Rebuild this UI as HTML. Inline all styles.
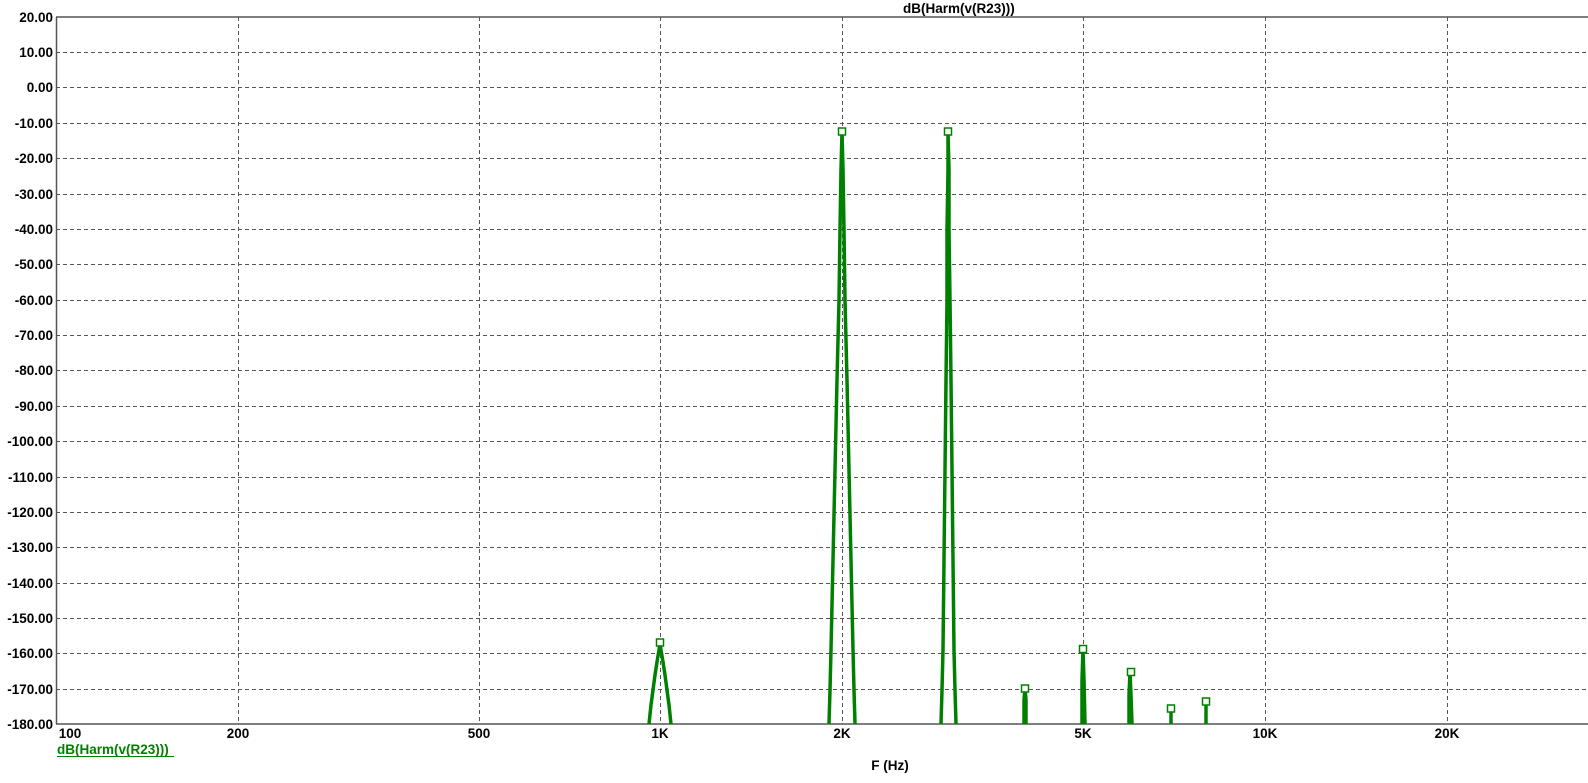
<!DOCTYPE html>
<html><head><meta charset="utf-8"><style>
html,body{margin:0;padding:0;background:#fff;}
svg{display:block;}
text{font-family:"Liberation Sans",Arial,sans-serif;font-weight:bold;font-size:13.5px;fill:#000;}
</style></head><body>
<svg width="1588" height="783" xmlns="http://www.w3.org/2000/svg">
<g stroke="#555" stroke-width="1" stroke-dasharray="4,3" fill="none">
<line x1="56" y1="52.5" x2="1588" y2="52.5"/><line x1="56" y1="87.5" x2="1588" y2="87.5"/><line x1="56" y1="123.5" x2="1588" y2="123.5"/><line x1="56" y1="158.5" x2="1588" y2="158.5"/><line x1="56" y1="194.5" x2="1588" y2="194.5"/><line x1="56" y1="229.5" x2="1588" y2="229.5"/><line x1="56" y1="264.5" x2="1588" y2="264.5"/><line x1="56" y1="300.5" x2="1588" y2="300.5"/><line x1="56" y1="335.5" x2="1588" y2="335.5"/><line x1="56" y1="370.5" x2="1588" y2="370.5"/><line x1="56" y1="406.5" x2="1588" y2="406.5"/><line x1="56" y1="441.5" x2="1588" y2="441.5"/><line x1="56" y1="477.5" x2="1588" y2="477.5"/><line x1="56" y1="512.5" x2="1588" y2="512.5"/><line x1="56" y1="547.5" x2="1588" y2="547.5"/><line x1="56" y1="583.5" x2="1588" y2="583.5"/><line x1="56" y1="618.5" x2="1588" y2="618.5"/><line x1="56" y1="653.5" x2="1588" y2="653.5"/><line x1="56" y1="689.5" x2="1588" y2="689.5"/>
<line x1="238.5" y1="17" x2="238.5" y2="724"/><line x1="479.5" y1="17" x2="479.5" y2="724"/><line x1="660.5" y1="17" x2="660.5" y2="724"/><line x1="842.5" y1="17" x2="842.5" y2="724"/><line x1="1083.5" y1="17" x2="1083.5" y2="724"/><line x1="1265.5" y1="17" x2="1265.5" y2="724"/><line x1="1447.5" y1="17" x2="1447.5" y2="724"/>
</g>
<g stroke="#555" stroke-width="1.5" fill="none">
<line x1="56.5" y1="17" x2="56.5" y2="724"/><line x1="56" y1="17" x2="1588" y2="17"/><line x1="56" y1="724" x2="1588" y2="724"/>
</g>
<g stroke="#008000" stroke-width="3.5" fill="none" stroke-linejoin="miter">
<polyline points="649,724 651,705 653,690 655,675 657,662 659,650 660,643 661,650 663,662 665,675 667,690 669,705 671,724"/>
<polyline points="829,724 830,690 831,650 833,560 835,470 837,380 839,300 840,230 841,170 842,132 843,170 844,230 845,300 847,380 849,470 851,560 853,650 854,690 855,724"/>
<polyline points="941,724 942,690 943,650 944,560 945,470 946,380 947,300 947,230 948,170 948,132 949,170 949,230 950,300 951,380 952,470 953,560 954,650 955,690 956,724"/>
<polyline points="1024,724 1024,700 1025,688 1026,700 1026,724"/>
<polyline points="1082,724 1082,680 1083,649 1084,680 1085,724"/>
<polyline points="1129,724 1129,695 1130,672 1131,695 1132,724"/>
<line x1="1171" y1="724" x2="1171" y2="705"/>
<line x1="1206" y1="724" x2="1206" y2="698"/>
</g>
<g stroke="#008000" stroke-width="1.5" fill="#fff">
<rect x="656.5" y="639" width="7" height="7"/>
<rect x="838.5" y="128" width="7" height="7"/>
<rect x="944.5" y="128" width="7" height="7"/>
<rect x="1021.5" y="685" width="7" height="7"/>
<rect x="1079.5" y="645.5" width="7" height="7"/>
<rect x="1127.5" y="668.5" width="7" height="7"/>
<rect x="1167.5" y="705" width="7" height="7"/>
<rect x="1202.5" y="698" width="7" height="7"/>
</g>
<g text-anchor="end">
<text x="53" y="22">20.00</text><text x="53" y="57">10.00</text><text x="53" y="92">0.00</text><text x="53" y="128">-10.00</text><text x="53" y="163">-20.00</text><text x="53" y="199">-30.00</text><text x="53" y="234">-40.00</text><text x="53" y="269">-50.00</text><text x="53" y="305">-60.00</text><text x="53" y="340">-70.00</text><text x="53" y="375">-80.00</text><text x="53" y="411">-90.00</text><text x="53" y="446">-100.00</text><text x="53" y="482">-110.00</text><text x="53" y="517">-120.00</text><text x="53" y="552">-130.00</text><text x="53" y="588">-140.00</text><text x="53" y="623">-150.00</text><text x="53" y="658">-160.00</text><text x="53" y="694">-170.00</text><text x="53" y="729">-180.00</text>
</g>
<g text-anchor="middle">
<text x="70" y="738">100</text><text x="238" y="738">200</text><text x="479" y="738">500</text><text x="660" y="738">1K</text><text x="842" y="738">2K</text><text x="1083" y="738">5K</text><text x="1265" y="738">10K</text><text x="1447" y="738">20K</text>
<text x="890" y="770">F (Hz)</text>
</g>
<text x="903" y="13">dB(Harm(v(R23)))</text>
<text x="57" y="754" style="fill:#008000">dB(Harm(v(R23)))</text>
<line x1="57" y1="756.5" x2="174" y2="756.5" stroke="#008000" stroke-width="1"/>
</svg>
</body></html>
